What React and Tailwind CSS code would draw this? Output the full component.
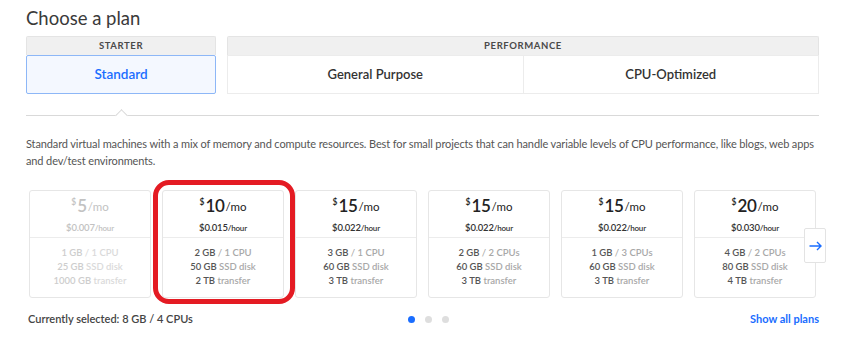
import React from "react";

const plans = [
  { p: "5", h: "0.007", mem: "1 GB", cpu: "1 CPU", disk: "25 GB", tr: "1000 GB", disabled: true },
  { p: "10", h: "0.015", mem: "2 GB", cpu: "1 CPU", disk: "50 GB", tr: "2 TB" },
  { p: "15", h: "0.022", mem: "3 GB", cpu: "1 CPU", disk: "60 GB", tr: "3 TB" },
  { p: "15", h: "0.022", mem: "2 GB", cpu: "2 CPUs", disk: "60 GB", tr: "3 TB" },
  { p: "15", h: "0.022", mem: "1 GB", cpu: "3 CPUs", disk: "60 GB", tr: "3 TB" },
  { p: "20", h: "0.030", mem: "4 GB", cpu: "2 CPUs", disk: "80 GB", tr: "4 TB" },
];

function Card({ plan }) {
  const d = plan.disabled;
  const strong = d ? "text-[#c2c2c2]" : "text-[#222]";
  const val = d ? "text-[#cdcdcd]" : "text-[#555]";
  const light = d ? "text-[#dadada]" : "text-[#a8a8a8]";
  return (
    <div className="w-[122px] h-[108px] shrink-0 flex flex-col border border-[#e6e6e6] rounded-[3px] bg-white">
      <div className="h-[47px] flex flex-col items-center justify-center border-b border-[#ececec] pt-[2px]">
        <div className={`flex items-start leading-none ${strong}`}>
          <span className="text-[8.5px] mt-[1px] mr-[1px] font-semibold">$</span>
          <span className="text-[17px] font-semibold tracking-[-0.3px]">{plan.p}</span>
          <span className="text-[11.5px] mt-[4px] ml-[1px]">/mo</span>
        </div>
        <div className={`mt-[3px] leading-none tracking-[-0.2px] ${d ? "text-[#c2c2c2]" : "text-[#333]"}`}>
          <span className="text-[9.5px] font-semibold">${plan.h}</span>
          <span className="text-[8px] font-semibold">/hour</span>
        </div>
      </div>
      <div className="flex-1 flex flex-col items-center justify-center text-[9.5px] leading-[14px] font-semibold pb-[1px]">
        <div>
          <span className={val}>{plan.mem}</span>
          <span className={light}> / {plan.cpu}</span>
        </div>
        <div>
          <span className={val}>{plan.disk}</span>
          <span className={light}> SSD disk</span>
        </div>
        <div>
          <span className={val}>{plan.tr}</span>
          <span className={light}> transfer</span>
        </div>
      </div>
    </div>
  );
}

export default function App() {
  return (
    <div
      className="w-[848px] h-[341px] bg-white relative overflow-hidden text-[#333]"
      style={{ fontFamily: "Lato, 'Open Sans', sans-serif" }}
    >
      <div className="pl-[26px] w-[819px]">
        <h1 className="text-[18.5px] leading-[22px] pt-[7px] text-[#3a3a3a] font-normal">Choose a plan</h1>

        {/* Tabs */}
        <div className="flex gap-[11px] mt-[7px]">
          <div className="w-[190px] flex flex-col">
            <div className="h-[19px] bg-[#f0f0f0] border border-[#e4e4e4] border-b-0 rounded-t-[2px] flex items-center justify-center text-[9.5px] font-bold tracking-[0.6px] text-[#4a4a4a]">
              STARTER
            </div>
            <div className="h-[39px] bg-[#f4f8ff] border border-[#8db7f7] rounded-[2px] flex items-center justify-center text-[13.5px] font-semibold text-[#1a6dff]">
              Standard
            </div>
          </div>
          <div className="flex-1 flex flex-col">
            <div className="h-[19px] bg-[#f0f0f0] border border-[#e4e4e4] border-b-0 rounded-t-[2px] flex items-center justify-center text-[9.5px] font-bold tracking-[0.6px] text-[#4a4a4a]">
              PERFORMANCE
            </div>
            <div className="h-[39px] border border-[#ececec] flex">
              <div className="flex-1 flex items-center justify-center text-[13px] font-semibold text-[#333] border-r border-[#ececec]">
                General Purpose
              </div>
              <div className="flex-1 flex items-center justify-center text-[13px] font-semibold text-[#333]">
                CPU-Optimized
              </div>
            </div>
          </div>
        </div>

        {/* Divider with notch */}
        <div className="relative mt-[21px] h-[2px] border-t border-[#d9d9d9]">
          <div className="absolute left-[91px] top-[-5px] w-[9px] h-[9px] rotate-45 bg-white border-t border-l border-[#d9d9d9]" />
        </div>

        {/* Description */}
        <p className="mt-[18px] text-[11px] tracking-[-0.12px] leading-[17px] text-[#555]">
          Standard virtual machines with a mix of memory and compute resources. Best for small projects that can handle variable levels of CPU performance, like blogs, web apps and dev/test environments.
        </p>

        {/* Cards */}
        <div className="relative mt-[21px] ml-[3px] flex gap-[11px]">
          {plans.map((pl, i) => (
            <Card key={i} plan={pl} />
          ))}
          <div className="absolute left-[775px] top-[38px] w-[22px] h-[35px] bg-white border border-[#e3e3e3] rounded-[2px] flex items-center justify-center">
            <svg width="13" height="10" viewBox="0 0 13 10" fill="none" stroke="#1a6dff" strokeWidth="1.4">
              <path d="M0.5 5H12M8 1l4 4-4 4" />
            </svg>
          </div>
        </div>

        {/* Footer */}
        <div className="flex items-center mt-[14px] h-[14px]">
          <div className="text-[11px] font-semibold text-[#444] ml-[2px] w-[380px]">
            Currently selected: 8 GB / 4 CPUs
          </div>
          <div className="flex gap-[10px] items-center">
            <span className="w-[7px] h-[7px] rounded-full bg-[#1a6dff]" />
            <span className="w-[7px] h-[7px] rounded-full bg-[#dedede]" />
            <span className="w-[7px] h-[7px] rounded-full bg-[#dedede]" />
          </div>
          <div className="ml-auto text-[11px] font-bold text-[#1a6dff]">Show all plans</div>
        </div>
      </div>

      {/* Red annotation */}
      <div className="absolute left-[153px] top-[180px] w-[142px] h-[124px] border-[5px] border-[#e41b23] rounded-[16px] pointer-events-none" />
    </div>
  );
}
